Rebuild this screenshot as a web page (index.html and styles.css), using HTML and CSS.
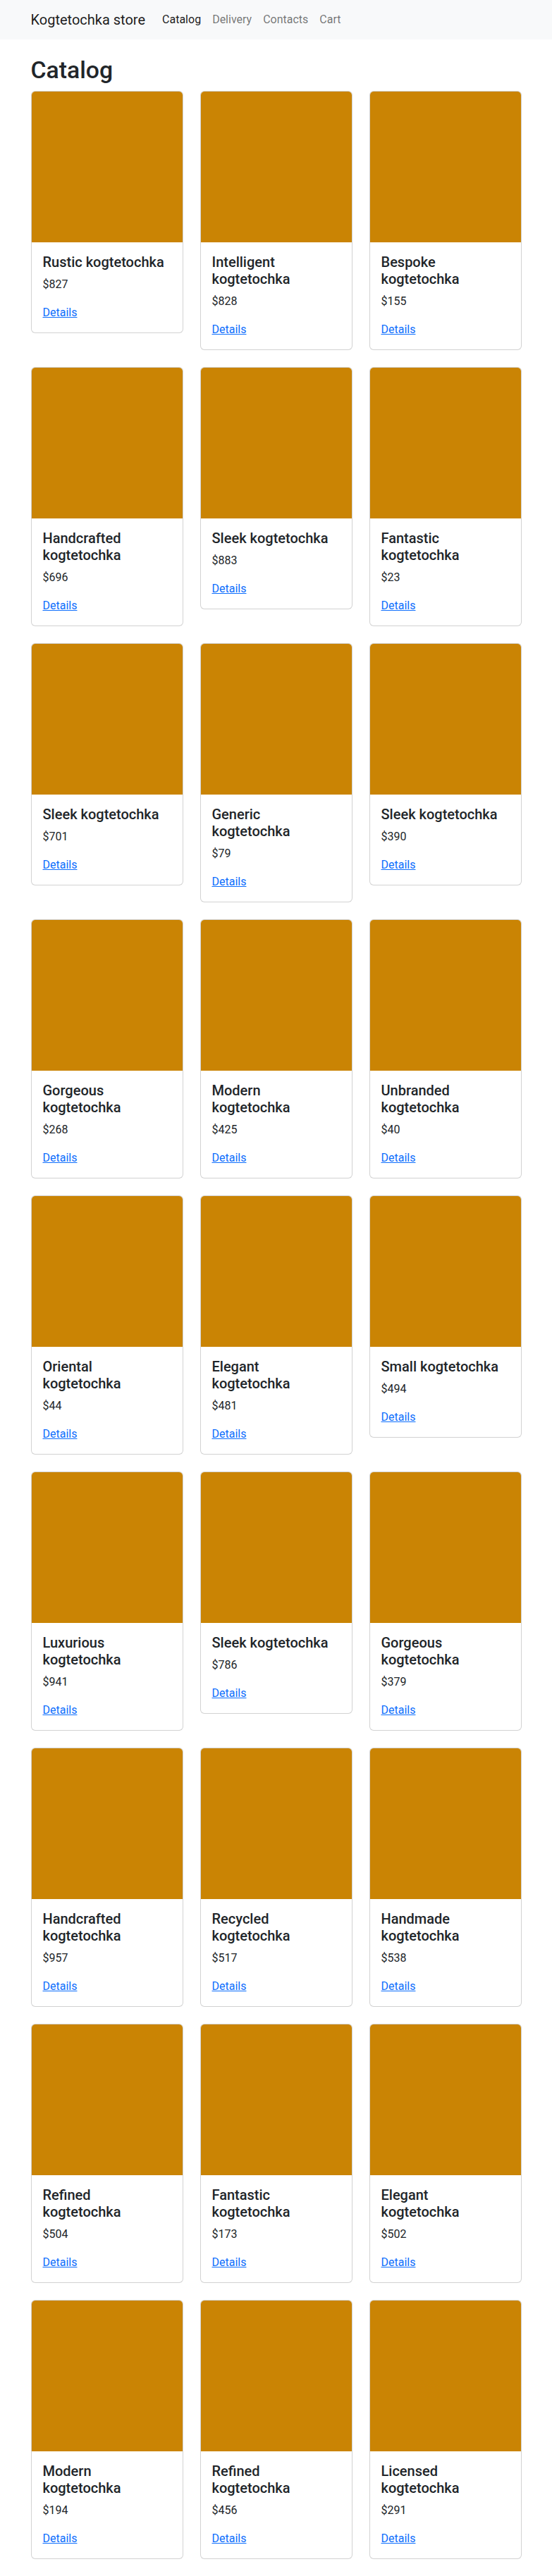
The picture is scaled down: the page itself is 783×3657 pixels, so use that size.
FILE: index.html
```html
<!DOCTYPE html>
<html lang="en">
<head>
<meta charset="utf-8">
<title>Kogtetochka store</title>
<link rel="stylesheet" href="styles.css">
</head>
<body>
<nav class="navbar">
  <div class="container nav-inner">
    <a class="brand" href="#">Kogtetochka store</a>
    <ul class="nav-links">
      <li><a class="nav-link active" href="#">Catalog</a></li>
      <li><a class="nav-link" href="#">Delivery</a></li>
      <li><a class="nav-link" href="#">Contacts</a></li>
      <li><a class="nav-link" href="#">Cart</a></li>
    </ul>
  </div>
</nav>
<main class="container main">
  <h1 class="page-title">Catalog</h1>
  <div class="grid">
    <div class="card"><div class="card-img"></div><div class="card-body"><h5 class="card-title">Rustic kogtetochka</h5><p class="card-text">$827</p><a href="#" class="card-link">Details</a></div></div>
    <div class="card"><div class="card-img"></div><div class="card-body"><h5 class="card-title">Intelligent kogtetochka</h5><p class="card-text">$828</p><a href="#" class="card-link">Details</a></div></div>
    <div class="card"><div class="card-img"></div><div class="card-body"><h5 class="card-title">Bespoke kogtetochka</h5><p class="card-text">$155</p><a href="#" class="card-link">Details</a></div></div>

    <div class="card"><div class="card-img"></div><div class="card-body"><h5 class="card-title">Handcrafted kogtetochka</h5><p class="card-text">$696</p><a href="#" class="card-link">Details</a></div></div>
    <div class="card"><div class="card-img"></div><div class="card-body"><h5 class="card-title">Sleek kogtetochka</h5><p class="card-text">$883</p><a href="#" class="card-link">Details</a></div></div>
    <div class="card"><div class="card-img"></div><div class="card-body"><h5 class="card-title">Fantastic kogtetochka</h5><p class="card-text">$23</p><a href="#" class="card-link">Details</a></div></div>

    <div class="card"><div class="card-img"></div><div class="card-body"><h5 class="card-title">Sleek kogtetochka</h5><p class="card-text">$701</p><a href="#" class="card-link">Details</a></div></div>
    <div class="card"><div class="card-img"></div><div class="card-body"><h5 class="card-title">Generic kogtetochka</h5><p class="card-text">$79</p><a href="#" class="card-link">Details</a></div></div>
    <div class="card"><div class="card-img"></div><div class="card-body"><h5 class="card-title">Sleek kogtetochka</h5><p class="card-text">$390</p><a href="#" class="card-link">Details</a></div></div>

    <div class="card"><div class="card-img"></div><div class="card-body"><h5 class="card-title">Gorgeous kogtetochka</h5><p class="card-text">$268</p><a href="#" class="card-link">Details</a></div></div>
    <div class="card"><div class="card-img"></div><div class="card-body"><h5 class="card-title">Modern kogtetochka</h5><p class="card-text">$425</p><a href="#" class="card-link">Details</a></div></div>
    <div class="card"><div class="card-img"></div><div class="card-body"><h5 class="card-title">Unbranded kogtetochka</h5><p class="card-text">$40</p><a href="#" class="card-link">Details</a></div></div>

    <div class="card"><div class="card-img"></div><div class="card-body"><h5 class="card-title">Oriental kogtetochka</h5><p class="card-text">$44</p><a href="#" class="card-link">Details</a></div></div>
    <div class="card"><div class="card-img"></div><div class="card-body"><h5 class="card-title">Elegant kogtetochka</h5><p class="card-text">$481</p><a href="#" class="card-link">Details</a></div></div>
    <div class="card"><div class="card-img"></div><div class="card-body"><h5 class="card-title">Small kogtetochka</h5><p class="card-text">$494</p><a href="#" class="card-link">Details</a></div></div>

    <div class="card"><div class="card-img"></div><div class="card-body"><h5 class="card-title">Luxurious kogtetochka</h5><p class="card-text">$941</p><a href="#" class="card-link">Details</a></div></div>
    <div class="card"><div class="card-img"></div><div class="card-body"><h5 class="card-title">Sleek kogtetochka</h5><p class="card-text">$786</p><a href="#" class="card-link">Details</a></div></div>
    <div class="card"><div class="card-img"></div><div class="card-body"><h5 class="card-title">Gorgeous kogtetochka</h5><p class="card-text">$379</p><a href="#" class="card-link">Details</a></div></div>

    <div class="card"><div class="card-img"></div><div class="card-body"><h5 class="card-title">Handcrafted kogtetochka</h5><p class="card-text">$957</p><a href="#" class="card-link">Details</a></div></div>
    <div class="card"><div class="card-img"></div><div class="card-body"><h5 class="card-title">Recycled kogtetochka</h5><p class="card-text">$517</p><a href="#" class="card-link">Details</a></div></div>
    <div class="card"><div class="card-img"></div><div class="card-body"><h5 class="card-title">Handmade kogtetochka</h5><p class="card-text">$538</p><a href="#" class="card-link">Details</a></div></div>

    <div class="card"><div class="card-img"></div><div class="card-body"><h5 class="card-title">Refined kogtetochka</h5><p class="card-text">$504</p><a href="#" class="card-link">Details</a></div></div>
    <div class="card"><div class="card-img"></div><div class="card-body"><h5 class="card-title">Fantastic kogtetochka</h5><p class="card-text">$173</p><a href="#" class="card-link">Details</a></div></div>
    <div class="card"><div class="card-img"></div><div class="card-body"><h5 class="card-title">Elegant kogtetochka</h5><p class="card-text">$502</p><a href="#" class="card-link">Details</a></div></div>

    <div class="card"><div class="card-img"></div><div class="card-body"><h5 class="card-title">Modern kogtetochka</h5><p class="card-text">$194</p><a href="#" class="card-link">Details</a></div></div>
    <div class="card"><div class="card-img"></div><div class="card-body"><h5 class="card-title">Refined kogtetochka</h5><p class="card-text">$456</p><a href="#" class="card-link">Details</a></div></div>
    <div class="card"><div class="card-img"></div><div class="card-body"><h5 class="card-title">Licensed kogtetochka</h5><p class="card-text">$291</p><a href="#" class="card-link">Details</a></div></div>
  </div>
</main>
</body>
</html>
```
FILE: styles.css
```css
*, *::before, *::after { box-sizing: border-box; }

body {
  margin: 0;
  font-family: Roboto, "Noto Sans", "Liberation Sans", sans-serif;
  font-size: 16px;
  line-height: 1.5;
  color: #212529;
  background: #fff;
}

.container {
  width: 100%;
  max-width: 720px;
  margin: 0 auto;
  padding: 0 12px;
}

.navbar {
  background: #f8f9fa;
  padding: 8px 0;
}

.nav-inner {
  display: flex;
  align-items: center;
}

.brand {
  font-size: 20px;
  line-height: 30px;
  padding: 5px 0;
  margin-right: 16px;
  color: rgba(0, 0, 0, 0.9);
  text-decoration: none;
  white-space: nowrap;
}

.nav-links {
  display: flex;
  list-style: none;
  margin: 0;
  padding: 0;
}

.nav-link {
  display: block;
  padding: 8px;
  color: rgba(0, 0, 0, 0.55);
  text-decoration: none;
}

.nav-link.active { color: rgba(0, 0, 0, 0.9); }

.main {
  padding-top: 24px;
  padding-bottom: 25px;
}

.page-title {
  margin: 0 0 8px;
  font-size: 33.75px;
  font-weight: 500;
  line-height: 1.2;
}

.grid {
  display: grid;
  grid-template-columns: repeat(3, 1fr);
  column-gap: 24px;
  row-gap: 24px;
  align-items: start;
}

.card {
  display: flex;
  flex-direction: column;
  border: 1px solid rgba(0, 0, 0, 0.175);
  border-radius: 6px;
  overflow: hidden;
  background: #fff;
}

.card-img {
  aspect-ratio: 1 / 1;
  background: #ca8404;
}

.card-body {
  padding: 16px;
}

.card-title {
  margin: 0 0 8px;
  font-size: 20px;
  font-weight: 500;
  line-height: 1.2;
}

.card-text {
  margin: 0 0 16px;
}

.card-link {
  color: #0d6efd;
  text-decoration: underline;
}
```
